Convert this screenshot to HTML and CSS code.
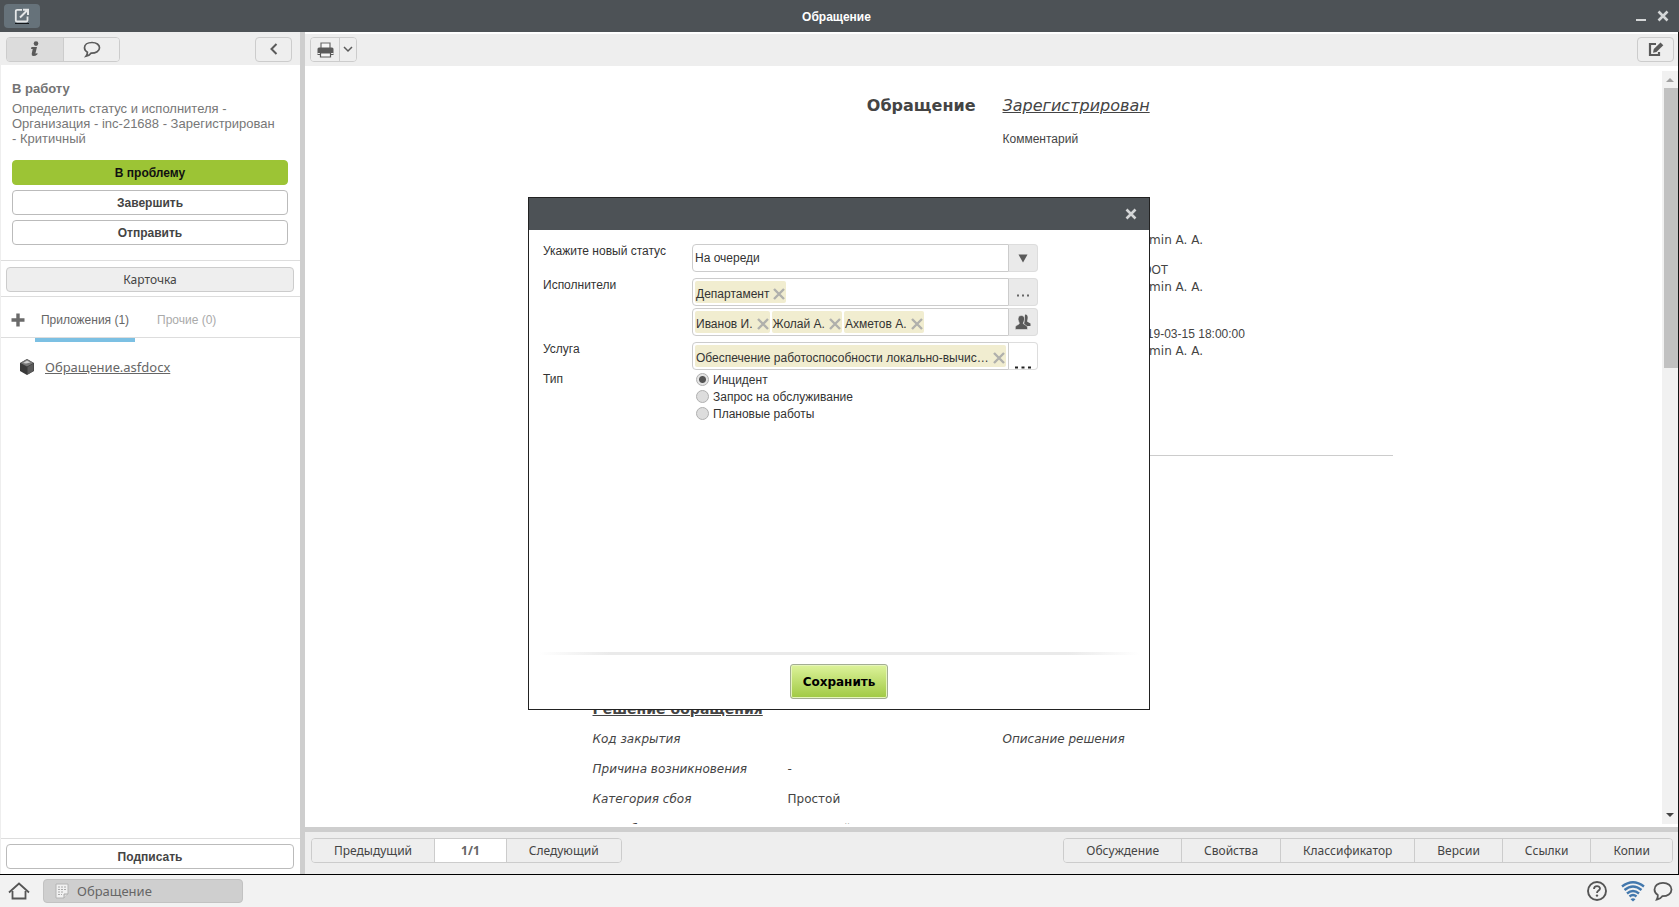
FILE: index.html
```html
<!DOCTYPE html>
<html lang="ru">
<head>
<meta charset="utf-8">
<title>Обращение</title>
<link rel="stylesheet" href="styles.css">
</head>
<body>
<div class="app">
  <header class="titlebar">
    <button class="popout" aria-label="Открыть в новом окне">
      <svg width="16" height="16" viewBox="0 0 16 16"><path d="M8 1.800H3.200Q1.800 1.800 1.800 3.200V12.500Q1.800 13.500 3.200 13.500H12.300Q13.500 13.500 13.500 12.300V8.500" fill="none" stroke="#e4e6e7" stroke-width="1.800"/><path d="M6 9.500L13 2.500M9 1.800H14V7" fill="none" stroke="#e4e6e7" stroke-width="2"/><path d="M1 15.500H15" stroke="#14171a"/></svg>
    </button>
    <h1 class="titlebar-text">Обращение</h1>
    <div class="win-buttons">
      <button class="bare" aria-label="Свернуть"><svg width="11" height="12" viewBox="0 0 11 12"><path d="M0 10H10" stroke="#d4d6d7" stroke-width="2"/></svg></button>
      <button class="bare" aria-label="Закрыть"><svg width="12" height="12" viewBox="0 0 12 12"><path d="M1.500 1.500L10.500 10.500M10.500 1.500L1.500 10.500" stroke="#d4d6d7" stroke-width="2.600"/></svg></button>
    </div>
  </header>

  <div class="workspace">
    <aside class="side">
      <div class="side-tools">
        <div class="group">
          <button class="seg seg-wide active" aria-label="Информация"><svg width="12" height="16" viewBox="0 0 12 16"><circle cx="7" cy="2.600" r="2.300" fill="#5a5a5a"/><path d="M2.500 6H8L6.400 12.500L8.600 12.200L8.300 13.500Q6.500 15 4.500 15Q2.300 15 2.700 12.800L3.700 8L2 8Z" fill="#5a5a5a"/></svg></button>
          <button class="seg seg-wide" aria-label="Комментарии"><svg width="18" height="17" viewBox="0 0 18 17"><path d="M9 1.500C4.500 1.500 1.500 3.700 1.500 6.800C1.500 8.800 2.800 10.300 4.400 11.200C4.500 12.800 4 14 3 15.200C5.500 14.800 7 13.600 8 12.200C13 12.300 16.500 10.200 16.500 6.800C16.500 3.700 13.500 1.500 9 1.500Z" fill="none" stroke="#5a5a5a" stroke-width="1.700"/></svg></button>
        </div>
        <button class="tool" aria-label="Свернуть панель"><svg width="10" height="12" viewBox="0 0 10 12"><path d="M7.500 1L2.500 6L7.500 11" fill="none" stroke="#5a5a5a" stroke-width="2"/></svg></button>
      </div>
      <section class="task">
        <h2 class="task-title">В работу</h2>
        <p class="task-text">Определить статус и исполнителя - Организация - inc-21688 - Зарегистрирован - Критичный</p>
        <div class="actions">
          <button class="action primary">В проблему</button>
          <button class="action">Завершить</button>
          <button class="action">Отправить</button>
        </div>
      </section>
      <div class="card-row"><button class="card-btn">Карточка</button></div>
      <div class="tabs">
        <button class="plus" aria-label="Добавить"><svg width="14" height="14" viewBox="0 0 14 14"><path d="M7 0.500V13.500M0.500 7H13.500" stroke="#6a6a6a" stroke-width="3.400"/></svg></button>
        <button class="tab current">Приложения (1)</button>
        <button class="tab">Прочие (0)</button>
      </div>
      <div class="files">
        <svg width="14" height="16" viewBox="0 0 14 16"><path d="M7 0L14 4V12L7 16L0 12V4Z" fill="#3a3a3a"/><path d="M7 0L13.500 4L7 7.500L0.500 4Z" fill="#777"/><path d="M3 4L7 1.500L10.500 3.500L6 4.500Z" fill="#d0d0d0"/><path d="M7.500 8L13.500 4.500V12L7.500 15.500Z" fill="#5b5b5b"/></svg>
        <a class="file-link" href="#">Обращение.asfdocx</a>
      </div>
      <div class="sign-row"><button class="action">Подписать</button></div>
    </aside>

    <main class="main">
      <div class="main-tools">
        <div class="group">
          <button class="seg seg-print" aria-label="Печать"><svg width="17" height="16" viewBox="0 0 17 16"><path d="M4 6V1H13V6" fill="#f6f6f6" stroke="#6a6a6a" stroke-width="1.200"/><path d="M2 5.500H15Q16.500 5.500 16.500 7V13H0.500V7Q0.500 5.500 2 5.500Z" fill="#5a5a5a"/><path d="M0.500 11.500H16.500" stroke="#eee" stroke-width="1"/><path d="M3.500 11H13.500V15H3.500Z" fill="#f6f6f6" stroke="#5a5a5a" stroke-width="1.200"/></svg></button>
          <button class="seg seg-drop" aria-label="Варианты печати"><svg width="10" height="7" viewBox="0 0 10 7"><path d="M1 1L5 5L9 1" fill="none" stroke="#5a5a5a" stroke-width="1.500"/></svg></button>
        </div>
        <button class="tool" aria-label="Редактировать"><svg width="16" height="15" viewBox="0 0 16 15"><path d="M8 2H2V13H11V10" fill="none" stroke="#5a5a5a" stroke-width="2.200"/><path d="M5 10.800L5.800 7L12.500 0.500L15.300 3.200L8.500 9.900Z" fill="#5a5a5a"/></svg></button>
      </div>

      <div class="viewer">
        <div class="page">
          <article class="doc">
            <div class="doc-row doc-head">
              <h2 class="doc-title">Обращение</h2>
              <span class="doc-status">Зарегистрирован</span>
            </div>
            <div class="doc-row doc-comment"><span class="right-col plain">Комментарий</span></div>
            <div class="people">
              <p class="person">Admin A. A.</p>
              <p class="person gap-s plain">ROOT</p>
              <p class="person">Admin A. A.</p>
              <p class="person gap-l plain">2019-03-15 18:00:00</p>
              <p class="person">Admin A. A.</p>
            </div>
            <hr class="doc-rule">
            <h3 class="doc-section">Решение обращения</h3>
            <div class="doc-row"><i>Код закрытия</i><span class="val"></span><i>Описание решения</i></div>
            <div class="doc-row"><i>Причина возникновения</i><span class="val">-</span></div>
            <div class="doc-row"><i>Категория сбоя</i><span class="val">Простой</span></div>
            <div class="doc-row"><i>Способ решения</i><span class="val">Плановый</span></div>
          </article>
        </div>
        <div class="scroll">
          <svg width="16" height="17" viewBox="0 0 16 17"><path d="M8 7L12 11H4Z" fill="#a0a0a0"/></svg>
          <div class="thumb"></div>
          <svg class="scroll-down" width="16" height="17" viewBox="0 0 16 17"><path d="M8 10L12 6H4Z" fill="#444"/></svg>
        </div>
      </div>

      <footer class="footer">
        <div class="group">
          <button class="nav">Предыдущий</button>
          <button class="nav page-no">1/1</button>
          <button class="nav">Следующий</button>
        </div>
        <div class="group">
          <button class="nav">Обсуждение</button>
          <button class="nav">Свойства</button>
          <button class="nav">Классификатор</button>
          <button class="nav">Версии</button>
          <button class="nav">Ссылки</button>
          <button class="nav">Копии</button>
        </div>
      </footer>
    </main>
  </div>

  <nav class="taskbar">
    <button class="bare" aria-label="Домой"><svg width="22" height="18" viewBox="0 0 22 18"><path d="M1 10.500L11 1.500L21 10.500" fill="none" stroke="#555" stroke-width="1.800"/><path d="M4.500 9V16.500H17.500V9" fill="none" stroke="#555" stroke-width="1.800"/></svg></button>
    <button class="task-btn"><svg width="14" height="16" viewBox="0 0 14 16"><path d="M1 1H13V11L9 15H1Z" fill="#f1f1f1" stroke="#b4b4b4"/><path d="M3 4H11M3 6.500H11M3 9H9M3 11.500H7" stroke="#aaa" stroke-dasharray="2 1"/><path d="M9 15V11H13" fill="#ddd" stroke="#aaa"/></svg>Обращение</button>
    <div class="tray">
      <button class="bare" aria-label="Справка"><svg width="20" height="20" viewBox="0 0 20 20"><circle cx="10" cy="10" r="9" fill="none" stroke="#555" stroke-width="1.900"/><path d="M7 8C7 4.200 13 4.200 13 7.600C13 9.600 10 9.600 10 12" fill="none" stroke="#555" stroke-width="1.800"/><circle cx="10" cy="14.600" r="1.200" fill="#555"/></svg></button>
      <button class="bare wifi" aria-label="Соединение"><svg width="24" height="21" viewBox="0 0 24 21"><g fill="none" stroke="#4378ad" stroke-width="2.400"><path d="M1 5.500Q12 -3 23 5.500"/><path d="M3.500 9Q12 2 20.500 9"/><path d="M6 12.500Q12 7.500 18 12.500"/><path d="M8.500 15.500Q12 12.500 15.500 15.500"/></g><path d="M12 20.500L9.500 18.200Q12 16.300 14.500 18.200Z" fill="#4378ad"/></svg></button>
      <button class="bare" aria-label="Чат"><svg width="20" height="20" viewBox="0 0 20 20"><path d="M10 1.800C5 1.800 1.500 4.600 1.500 8.500C1.500 11 2.800 12.800 4.800 14C5 15.800 4.700 17 3.800 18.500C6.500 18 8.200 16.800 9.300 15.200C14.500 15.300 18.500 12.600 18.500 8.500C18.500 4.600 15 1.800 10 1.800Z" fill="none" stroke="#555" stroke-width="1.800"/></svg></button>
    </div>
  </nav>
</div>

<div class="overlay">
  <form class="dialog" role="dialog" aria-label="Новый статус">
    <div class="dialog-head"><button type="button" class="bare" aria-label="Закрыть окно"><svg width="12" height="12" viewBox="0 0 12 12"><path d="M1.500 1.500L10.500 10.500M10.500 1.500L1.500 10.500" stroke="#d4d6d7" stroke-width="2.600"/></svg></button></div>
    <div class="dialog-body">
      <label class="lbl" for="status">Укажите новый статус</label>
      <div class="field">
        <select id="status" class="field-main"><option>На очереди</option></select>
        <span class="field-btn"><svg width="10" height="9" viewBox="0 0 10 9"><path d="M0.500 0.500H9.500L5 8.500Z" fill="#5a5a5a"/></svg></span>
      </div>
      <span class="lbl">Исполнители</span>
      <div class="stack">
        <div class="field">
          <div class="field-main chips"><span class="chip">Департамент<button type="button" class="bare" aria-label="Убрать Департамент"><svg class="x" viewBox="0 0 12 12"><path d="M1 1L11 11M11 1L1 11"/></svg></button></span></div>
          <button type="button" class="field-btn dots" aria-label="Выбрать подразделение"><svg width="14" height="3" viewBox="0 0 14 3"><path d="M1 0.500H3V2.500H1ZM6 0.500H8V2.500H6ZM11 0.500H13V2.500H11Z" fill="#666"/></svg></button>
        </div>
        <div class="field">
          <div class="field-main chips">
            <span class="chip">Иванов И.<button type="button" class="bare gap" aria-label="Убрать Иванов И."><svg class="x" viewBox="0 0 12 12"><path d="M1 1L11 11M11 1L1 11"/></svg></button></span>
            <span class="chip">Жолай А.<button type="button" class="bare gap" aria-label="Убрать Жолай А."><svg class="x" viewBox="0 0 12 12"><path d="M1 1L11 11M11 1L1 11"/></svg></button></span>
            <span class="chip">Ахметов А.<button type="button" class="bare gap" aria-label="Убрать Ахметов А."><svg class="x" viewBox="0 0 12 12"><path d="M1 1L11 11M11 1L1 11"/></svg></button></span>
          </div>
          <button type="button" class="field-btn" aria-label="Выбрать пользователей"><svg width="16" height="16" viewBox="0 0 16 16"><path d="M10 0.500C12.500 0.500 13 2.500 12.600 4.800C12.300 6.300 12 7 12.300 7.800L15.500 9.500V12H9Z" fill="#5a5a5a"/><path d="M6.300 1.500C9 1.500 9.800 3.300 9.500 5.700C9.300 7.300 8.300 8.300 8.300 9.300C8.300 10.800 12 11 12.500 13V15.500H0.300V13C0.800 11 4.300 10.800 4.300 9.300C4.300 8.300 3.300 7.300 3.100 5.700C2.900 3.300 3.800 1.500 6.300 1.500Z" fill="#5a5a5a" stroke="#eaeaea" stroke-width="0.600"/></svg></button>
        </div>
      </div>
      <span class="lbl">Услуга</span>
      <div class="field">
        <div class="field-main chips"><span class="chip chip-long"><span class="chip-text">Обеспечение работоспособности локально-вычислительной сети</span><button type="button" class="bare" aria-label="Убрать услугу"><svg class="x" viewBox="0 0 12 12"><path d="M1 1L11 11M11 1L1 11"/></svg></button></span></div>
        <button type="button" class="field-btn low" aria-label="Выбрать услугу"><svg width="16" height="3" viewBox="0 0 16 3"><path d="M0 0.500H3V2.500H0ZM6.500 0.500H9.500V2.500H6.500ZM13 0.500H16V2.500H13Z" fill="#222"/></svg></button>
      </div>
      <span class="lbl lbl-type" id="type-label">Тип</span>
      <div class="radios" role="radiogroup" aria-labelledby="type-label">
        <label class="radio"><input type="radio" name="type" checked>Инцидент</label>
        <label class="radio"><input type="radio" name="type">Запрос на обслуживание</label>
        <label class="radio"><input type="radio" name="type">Плановые работы</label>
      </div>
    </div>
    <div class="dialog-foot"><button type="button" class="save">Сохранить</button></div>
  </form>
</div>
</body>
</html>
```

FILE: styles.css
```css
* { box-sizing: border-box; }
body {
  margin: 0;
  font-family: "Liberation Sans", Arial, sans-serif;
  font-size: 13px;
  color: #444;
  background: #fff;
}
h1, h2, h3, p { margin: 0; }
button { font: inherit; color: inherit; padding: 0; margin: 0; cursor: pointer; }
svg { display: block; flex: none; }
.bare { border: 0; background: none; display: flex; align-items: center; }

.app { display: flex; flex-direction: column; height: 100vh; }

.titlebar {
  display: grid;
  grid-template-columns: 1fr auto 1fr;
  align-items: center;
  height: 32px;
  padding: 0 10px 0 4px;
  background: #4d5256;
}
.titlebar-text { padding-top: 1px; font-size: 12px; color: #fff; }
.popout {
  display: flex;
  align-items: center;
  justify-content: center;
  width: 36px;
  height: 24px;
  border: 0;
  border-radius: 4px;
  background: #66727a;
}
.win-buttons { display: flex; justify-content: flex-end; align-items: center; gap: 10px; }

.workspace {
  flex: 1;
  min-height: 0;
  display: flex;
  border-right: 1px solid #111;
  border-bottom: 1px solid #000;
}

/* Side panel */
.side {
  flex: none;
  width: 305px;
  display: flex;
  flex-direction: column;
  border-left: 1px solid #eee;
  border-right: 5px solid #cecece;
}
.side-tools, .main-tools {
  display: flex;
  justify-content: space-between;
  align-items: center;
  background: #eee;
}
.side-tools { height: 33px; padding: 1px 8px 0 5px; }
.group { display: flex; border: 1px solid #ccc; border-radius: 4px; overflow: hidden; }
.seg {
  display: flex;
  align-items: center;
  justify-content: center;
  height: 23px;
  border: 0;
  background: #eee;
}
.seg + .seg { border-left: 1px solid #ccc; }
.seg-wide { width: 56px; }
.seg-print { width: 28px; }
.seg-drop { width: 17px; }
.active { background: #dcdcdc; }
.tool {
  display: flex;
  align-items: center;
  justify-content: center;
  width: 37px;
  height: 25px;
  border: 1px solid #ccc;
  border-radius: 4px;
  background: #eee;
}
.task { padding: 16px 12px 14px 11px; border-bottom: 1px solid #ddd; }
.task-title { font-size: 13px; line-height: 15px; color: #737373; margin-bottom: 5px; }
.task-text { padding-right: 12px; line-height: 15px; color: #777; }
.actions { display: flex; flex-direction: column; gap: 5px; margin: 14px 0 15px; }
.task { padding-bottom: 0; }
.action {
  display: block;
  width: 100%;
  height: 25px;
  border: 1px solid #bbb;
  border-radius: 4px;
  background: #fff;
  font-size: 12px;
  font-weight: bold;
}
.primary { background: #9cc435; border-color: #9cc435; color: #111; }
.card-row { padding: 6px 6px 4px 5px; border-bottom: 1px solid #ddd; }
.card-btn {
  display: block;
  width: 100%;
  height: 25px;
  border: 1px solid #ccc;
  border-radius: 4px;
  background: #eee;
  font-family: "Noto Sans", sans-serif;
  font-size: 12px;
}
.tabs { display: flex; height: 41px; padding-left: 10px; border-bottom: 1px solid #ddd; }
.plus { border: 0; background: none; padding-top: 6px; margin-right: 10px; }
.tab {
  border: 0;
  background: none;
  padding: 4px 17px 3px 22px;
  height: 45px;
  font-size: 12px;
  color: #aaa;
}
.current { width: 100px; border-bottom: 4px solid #7cc0e3; padding: 4px 0 0; color: #666; }
.files { flex: 1; display: flex; align-items: flex-start; gap: 11px; padding: 21px 0 0 19px; }
.file-link { font-family: "Noto Sans", sans-serif; line-height: 16px; color: #666; }
.sign-row { padding: 5px 6px 5px 5px; border-top: 1px solid #ddd; }

/* Document area */
.main { flex: 1; min-width: 0; display: flex; flex-direction: column; }
.main-tools { height: 34px; border-top: 2px solid #fff; padding: 0 4px 1px 5px; }
.viewer { flex: 1; min-height: 0; display: flex; padding: 5px 0 3px 0; }
.page { flex: 1; overflow: hidden; padding-left: 18px; }
.doc { width: 800px; margin: 0 auto; font-family: "DejaVu Sans", sans-serif; font-size: 12px; }
.doc-row { display: grid; grid-template-columns: 195px 215px 1fr; height: 30px; align-items: center; }
.doc-head { grid-template-columns: 383px 1fr; column-gap: 27px; height: 48px; padding-top: 20px; }
.doc-title { font-size: 16px; text-align: right; }
.doc-status { font-size: 16px; font-style: italic; text-decoration: underline; }
.doc-comment { height: 40px; }
.right-col { grid-column: 3; }
.plain { font-family: "Liberation Sans", Arial, sans-serif; font-size: 12px; }
.people { margin: 73px 0 95px 541px; }
.person { height: 17px; line-height: 17px; }
.gap-s { margin-top: 13px; }
.gap-l { margin-top: 30px; }
.doc-rule { border: 0; border-top: 1px solid #ccc; margin: 0; }
.doc-section { margin-top: 243px; font-size: 14px; line-height: 20px; text-decoration: underline; padding-bottom: 5px; }
.scroll { width: 16px; display: flex; flex-direction: column; background: #f1f1f1; }
.thumb { height: 280px; margin-left: 2px; background: #c1c1c1; }
.scroll-down { margin-top: auto; }
.footer {
  display: flex;
  justify-content: space-between;
  align-items: flex-start;
  height: 47px;
  padding: 6px 5px 0 6px;
  border-top: 5px solid #cecece;
  background: #eee;
}
.nav {
  height: 23px;
  padding: 0 22px;
  border: 0;
  background: #eee;
  font-family: "Noto Sans", sans-serif;
  font-size: 12px;
}
.nav + .nav { border-left: 1px solid #ccc; }
.page-no { padding: 0 26px; background: #fff; font-weight: bold; color: #666; }

.taskbar { display: flex; align-items: center; height: 32px; padding: 0 6px 0 8px; background: #f2f2f2; }
.task-btn {
  display: flex;
  align-items: center;
  gap: 8px;
  width: 200px;
  height: 24px;
  margin-left: 13px;
  padding-left: 11px;
  border: 1px solid #c2c2c2;
  border-radius: 4px;
  background: #cfcfcf;
  color: #666;
  font-family: "Noto Sans", sans-serif;
}
.tray { display: flex; align-items: center; gap: 10px; margin-left: auto; }
.wifi { margin: 0 -2px 0 4px; }

/* Dialog */
.overlay { position: fixed; inset: 0; display: flex; align-items: center; justify-content: center; padding-right: 1px; }
.dialog {
  width: 622px;
  min-height: 513px;
  display: flex;
  flex-direction: column;
  border: 1px solid #222;
  background: #fff;
  font-size: 12px;
  color: #333;
}
.dialog-head {
  display: flex;
  align-items: center;
  justify-content: flex-end;
  height: 32px;
  padding-right: 12px;
  background: #4d5256;
}
.dialog-body {
  flex: 1;
  display: grid;
  grid-template-columns: 149px 346px;
  align-content: start;
  row-gap: 6px;
  padding: 14px;
}
.lbl { line-height: 14px; }
.lbl-type { margin-top: -4px; }
.stack { display: flex; flex-direction: column; gap: 2px; }
.field { display: flex; height: 28px; }
.field-main {
  flex: 1;
  min-width: 0;
  height: 28px;
  border: 1px solid #ccc;
  border-radius: 4px 0 0 4px;
  background: #fff;
  appearance: none;
  font: inherit;
  color: inherit;
  padding: 0 2px;
}
.field-btn {
  display: flex;
  align-items: center;
  justify-content: center;
  width: 29px;
  border: 1px solid #ddd;
  border-left: 0;
  border-radius: 0 4px 4px 0;
  background: #eaeaea;
}
.dots { padding-top: 7px; }
.low { align-items: flex-end; background: #fff; }
.chips { display: flex; align-items: center; gap: 2px; padding-bottom: 1px; }
.chip {
  display: flex;
  align-items: center;
  gap: 4px;
  height: 22px;
  padding: 4px 1px 0;
  border-radius: 2px;
  background: #f1edd0;
}
.chip-long { flex: 1; min-width: 0; }
.chip-text { flex: 1; overflow: hidden; white-space: nowrap; text-overflow: ellipsis; }
.x { width: 12px; height: 12px; fill: none; stroke: #b0b0ac; stroke-width: 2.4; }
.radios { margin-top: -5px; }
.radio { display: flex; align-items: center; gap: 4px; height: 17px; padding-left: 4px; }
.radio input {
  appearance: none;
  width: 13px;
  height: 13px;
  margin: 0;
  border: 1px solid #b0b0b0;
  border-radius: 50%;
  background: #ddd;
}
.radio input:checked { background: radial-gradient(circle, #555 0 3px, #e4e4e4 4px); }
.dialog-foot { display: flex; justify-content: center; padding: 12px 0 10px; position: relative; }
.dialog-foot::before {
  content: "";
  position: absolute;
  inset: 0 10px auto;
  height: 3px;
  background: linear-gradient(to right, #fff, #eaeaea 12%, #eaeaea 88%, #fff);
}
.save {
  width: 98px;
  height: 35px;
  border: 1px solid #a3ad93;
  border-radius: 3px;
  background: linear-gradient(#ddf39b, #a0c943);
  box-shadow: inset 0 0 0 1px #e6f5bd;
  color: #000;
  font-family: "DejaVu Sans", sans-serif;
  font-weight: bold;
  font-size: 12px;
}
```
